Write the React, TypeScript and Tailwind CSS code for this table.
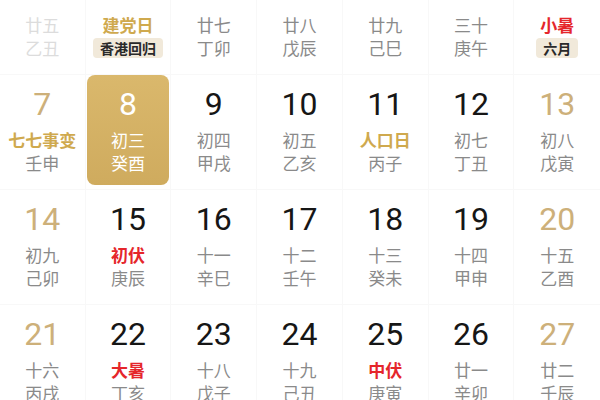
import React from "react";

type Day = {
  n: string;
  lunar: string;
  gz?: string;
  tag?: string;
  kind?: "weekend" | "faded" | "selected";
  lunarTone?: "gold" | "red";
};

const rows: Day[][] = [
  [
    { n: "30", lunar: "廿五", gz: "乙丑", kind: "faded" },
    { n: "1", lunar: "建党日", tag: "香港回归", lunarTone: "gold" },
    { n: "2", lunar: "廿七", gz: "丁卯" },
    { n: "3", lunar: "廿八", gz: "戊辰" },
    { n: "4", lunar: "廿九", gz: "己巳" },
    { n: "5", lunar: "三十", gz: "庚午" },
    { n: "6", lunar: "小暑", tag: "六月", kind: "weekend", lunarTone: "red" },
  ],
  [
    { n: "7", lunar: "七七事变", gz: "壬申", kind: "weekend", lunarTone: "gold" },
    { n: "8", lunar: "初三", gz: "癸酉", kind: "selected" },
    { n: "9", lunar: "初四", gz: "甲戌" },
    { n: "10", lunar: "初五", gz: "乙亥" },
    { n: "11", lunar: "人口日", gz: "丙子", lunarTone: "gold" },
    { n: "12", lunar: "初七", gz: "丁丑" },
    { n: "13", lunar: "初八", gz: "戊寅", kind: "weekend" },
  ],
  [
    { n: "14", lunar: "初九", gz: "己卯", kind: "weekend" },
    { n: "15", lunar: "初伏", gz: "庚辰", lunarTone: "red" },
    { n: "16", lunar: "十一", gz: "辛巳" },
    { n: "17", lunar: "十二", gz: "壬午" },
    { n: "18", lunar: "十三", gz: "癸未" },
    { n: "19", lunar: "十四", gz: "甲申" },
    { n: "20", lunar: "十五", gz: "乙酉", kind: "weekend" },
  ],
  [
    { n: "21", lunar: "十六", gz: "丙戌", kind: "weekend" },
    { n: "22", lunar: "大暑", gz: "丁亥", lunarTone: "red" },
    { n: "23", lunar: "十八", gz: "戊子" },
    { n: "24", lunar: "十九", gz: "己丑" },
    { n: "25", lunar: "中伏", gz: "庚寅", lunarTone: "red" },
    { n: "26", lunar: "廿一", gz: "辛卯" },
    { n: "27", lunar: "廿二", gz: "壬辰", kind: "weekend" },
  ],
];

const cjk = "font-['Noto_Sans_CJK_SC',sans-serif]";
const num = "font-['Roboto','Noto_Sans',sans-serif]";

function Cell({ d }: { d: Day }) {
  const selected = d.kind === "selected";
  const faded = d.kind === "faded";

  const numColor = selected
    ? "text-white"
    : faded
    ? "text-[#dddddd]"
    : d.kind === "weekend"
    ? "text-[#cdb07a]"
    : "text-[#161616]";

  let lunarColor = "text-[#8a8a8a]";
  let lunarWeight = "font-normal";
  if (faded) lunarColor = "text-[#dcdcdc]";
  if (selected) lunarColor = "text-white";
  if (d.lunarTone === "gold") {
    lunarColor = "text-[#cfa94e]";
    lunarWeight = "font-bold";
  }
  if (d.lunarTone === "red") {
    lunarColor = "text-[#e5262b]";
    lunarWeight = "font-bold";
  }
  const gzColor = selected ? "text-white" : faded ? "text-[#dcdcdc]" : "text-[#8a8a8a]";

  const body = (
    <div className="flex flex-col items-center pt-[11px]">
      <div className={`${num} text-[32px] leading-[36px] font-normal ${numColor}`}>{d.n}</div>
      <div className={`${cjk} mt-[6px] text-[17px] leading-[23px] ${lunarWeight} ${lunarColor}`}>{d.lunar}</div>
      {d.tag ? (
        <div className="mt-[2px] rounded-[4px] bg-[#f1e9da] px-[7px] h-[20px] flex items-center">
          <span className={`${cjk} text-[14px] leading-[20px] font-bold text-[#2a2a2a]`}>{d.tag}</span>
        </div>
      ) : (
        <div className={`${cjk} text-[17px] leading-[23px] ${gzColor}`}>{d.gz}</div>
      )}
    </div>
  );

  return (
    <div className="h-[115px] border-r border-b border-[#f8f8f8] last:border-r-0">
      {selected ? (
        <div className="mx-[1px] h-[110px] rounded-[8px] bg-gradient-to-b from-[#dab86c] to-[#cfab5e]">
          {body}
        </div>
      ) : (
        body
      )}
    </div>
  );
}

export default function App() {
  return (
    <div className="w-[600px] h-[400px] overflow-hidden bg-white">
      <div className="-mt-[40px]">
        {rows.map((r, i) => (
          <div key={i} className="grid grid-cols-7">
            {r.map((d) => (
              <Cell key={d.n} d={d} />
            ))}
          </div>
        ))}
      </div>
    </div>
  );
}
